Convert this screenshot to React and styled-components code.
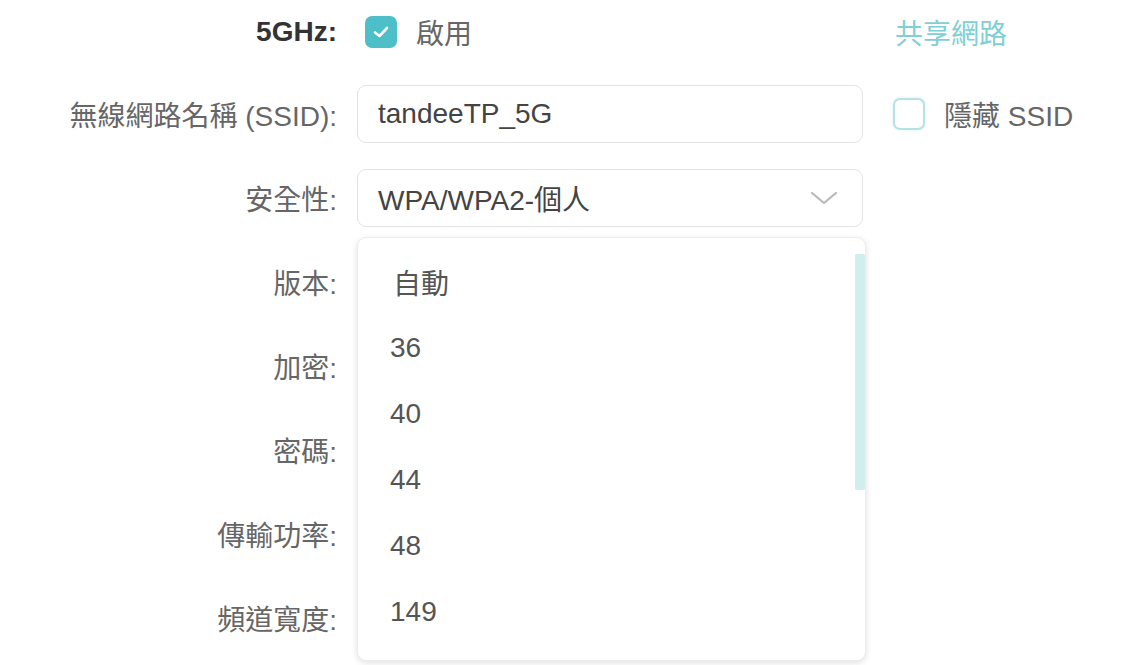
import React from 'react';
import styled, { createGlobalStyle } from 'styled-components';

const GlobalStyle = createGlobalStyle`
  html, body {
    margin: 0;
    padding: 0;
    background: #fff;
  }
  body {
    font-family: "Liberation Sans", "Noto Sans CJK TC", sans-serif;
    font-size: 28px;
    color: #666;
  }
`;

const Page = styled.div`
  padding-top: 5px;
  width: 1143px;
  height: 665px;
  overflow: hidden;
  box-sizing: border-box;
`;

const Form = styled.div`
  display: grid;
  grid-template-columns: 337px 506px 1fr;
  grid-auto-rows: 58px;
  grid-template-rows: 54px;
  column-gap: 20px;
  row-gap: 26px;
`;

const Label = styled.div`
  display: flex;
  align-items: center;
  justify-content: flex-end;
  white-space: nowrap;
  color: ${p => (p.$strong ? '#333' : '#666')};
  font-weight: ${p => (p.$strong ? 700 : 400)};
`;

const Cell = styled.div`
  position: relative;
  display: flex;
  align-items: center;
  gap: 19px;
  padding-left: ${p => (p.$side ? '2px' : '0')};
`;

const Box = styled.div`
  flex: 1;
  height: 58px;
  box-sizing: border-box;
  border: 1.5px solid #e3e3e3;
  border-radius: 9px;
  display: flex;
  align-items: center;
  justify-content: space-between;
  padding: 0 24px 0 20px;
  color: #444;
  background: #fff;
`;

const Check = styled.span`
  width: 32px;
  height: 32px;
  box-sizing: border-box;
  border-radius: 7px;
  display: inline-flex;
  align-items: center;
  justify-content: center;
  background: ${p => (p.$on ? '#4cbfc8' : '#fff')};
  border: 2px solid ${p => (p.$on ? '#4cbfc8' : '#b5e3e5')};
  box-shadow: ${p => (p.$on ? 'none' : '0 0 3px rgba(76,191,200,0.25)')};
  margin-left: 8px;
`;

const CheckText = styled.span`
  color: #666;
  white-space: nowrap;
`;

const Link = styled.span`
  color: #7fd0d4;
  margin-left: 10px;
`;

const Menu = styled.div`
  position: absolute;
  top: 68px;
  left: 0;
  width: 509px;
  height: 424px;
  box-sizing: border-box;
  background: #fff;
  border: 1px solid #ececec;
  border-radius: 9px;
  box-shadow: 0 2px 6px rgba(0,0,0,0.12);
  padding-top: 11px;
  overflow: hidden;
  z-index: 5;
`;

const Option = styled.div`
  height: 66px;
  display: flex;
  align-items: center;
  padding-left: ${p => (p.$cjk ? '35px' : '32px')};
  color: #555;
`;

const Thumb = styled.div`
  position: absolute;
  right: 0;
  top: 16px;
  width: 10px;
  height: 236px;
  background: #cfeeed;
  border-radius: 2px;
`;

const Chevron = () => (
  <svg width="28" height="16" viewBox="0 0 28 16">
    <polyline points="2,3 14,13 26,3" fill="none" stroke="#b9b9b9" strokeWidth="2.2" strokeLinecap="round" strokeLinejoin="round" />
  </svg>
);

const Tick = () => (
  <svg width="18" height="14" viewBox="0 0 18 14">
    <polyline points="3,7.5 7.5,11 15,3" fill="none" stroke="#fff" strokeWidth="2.6" strokeLinecap="round" strokeLinejoin="round" />
  </svg>
);

const options = ['自動', '36', '40', '44', '48', '149'];
const laterLabels = ['版本:', '加密:', '密碼:', '傳輸功率:', '頻道寬度:'];

export default function App() {
  return (
    <>
      <GlobalStyle />
      <Page>
        <Form>
          <Label $strong>5GHz:</Label>
          <Cell>
            <Check $on><Tick /></Check>
            <CheckText>啟用</CheckText>
          </Cell>
          <Cell $side><Link>共享網路</Link></Cell>

          <Label>無線網路名稱 (SSID):</Label>
          <Cell><Box>tandeeTP_5G</Box></Cell>
          <Cell $side>
            <Check />
            <CheckText>隱藏 SSID</CheckText>
          </Cell>

          <Label>安全性:</Label>
          <Cell>
            <Box>WPA/WPA2-個人<Chevron /></Box>
            <Menu>
              {options.map((o, i) => (
                <Option key={o} $cjk={i === 0}>{o}</Option>
              ))}
              <Thumb />
            </Menu>
          </Cell>
          <Cell $side />

          {laterLabels.map(l => (
            <React.Fragment key={l}>
              <Label>{l}</Label>
              <Cell />
              <Cell $side />
            </React.Fragment>
          ))}
        </Form>
      </Page>
    </>
  );
}
